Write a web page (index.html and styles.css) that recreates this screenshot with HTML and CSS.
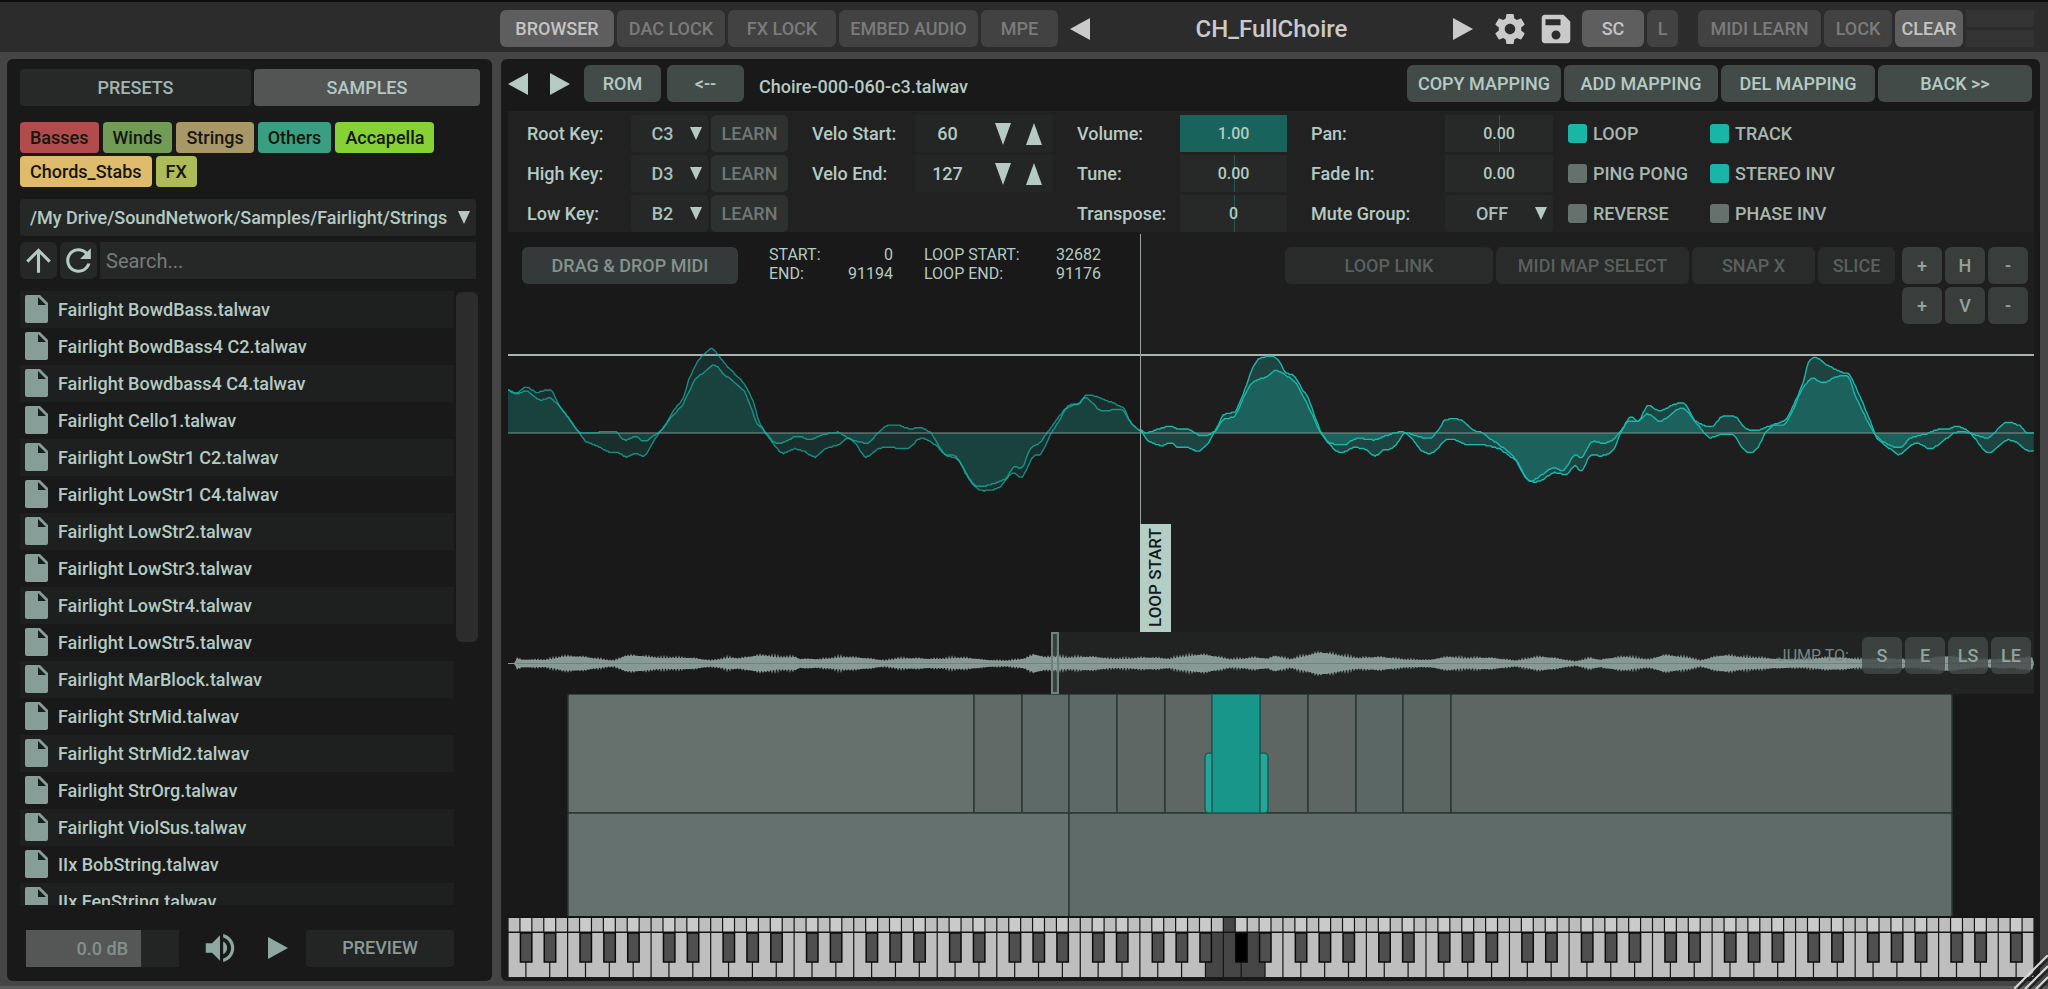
FILE: index.html
```html
<!DOCTYPE html>
<html lang="en">
<head>
<meta charset="utf-8">
<title>CH_FullChoire</title>
<link rel="stylesheet" href="styles.css">
</head>
<body>
<svg class="defs" aria-hidden="true">
  <symbol id="i-left" viewBox="0 0 20 22" preserveAspectRatio="none"><path d="M20 0v22L0 11z"/></symbol>
  <symbol id="i-right" viewBox="0 0 20 22" preserveAspectRatio="none"><path d="M0 0v22l20-11z"/></symbol>
  <symbol id="i-down" viewBox="0 0 16 22" preserveAspectRatio="none"><path d="M0 0h16L8 22z"/></symbol>
  <symbol id="i-up" viewBox="0 0 16 22" preserveAspectRatio="none"><path d="M0 22h16L8 0z"/></symbol>
  <symbol id="i-file" viewBox="0 0 23 28"><path d="M2 0h13l8 8v18a2 2 0 0 1-2 2H2a2 2 0 0 1-2-2V2a2 2 0 0 1 2-2z"/><path class="fold" d="M13 2v8h8z"/></symbol>
</svg>

<header class="topbar">
  <nav class="modes">
    <button class="tb on w-browser">BROWSER</button>
    <button class="tb w-dac">DAC LOCK</button>
    <button class="tb w-dac">FX LOCK</button>
    <button class="tb w-embed">EMBED AUDIO</button>
    <button class="tb w-mpe">MPE</button>
  </nav>
  <div class="preset">
    <button class="icon-btn" aria-label="Previous preset"><svg class="tri"><use href="#i-left"/></svg></button>
    <button class="preset-name">CH_FullChoire</button>
    <button class="icon-btn" aria-label="Next preset"><svg class="tri"><use href="#i-right"/></svg></button>
  </div>
  <div class="tools">
    <button class="icon-btn" aria-label="Settings"><svg class="big-icon" viewBox="0 0 24 24"><path d="M19.43 12.98c.04-.32.07-.64.07-.98s-.03-.66-.07-.98l2.11-1.65c.19-.15.24-.42.12-.64l-2-3.46c-.12-.22-.39-.3-.61-.22l-2.49 1c-.52-.4-1.08-.73-1.69-.98l-.38-2.65C14.46 2.18 14.25 2 14 2h-4c-.25 0-.46.18-.49.42l-.38 2.65c-.61.25-1.17.59-1.69.98l-2.49-1c-.23-.09-.49 0-.61.22l-2 3.46c-.13.22-.07.49.12.64l2.11 1.65c-.04.32-.07.65-.07.98s.03.66.07.98l-2.11 1.65c-.19.15-.24.42-.12.64l2 3.46c.12.22.39.3.61.22l2.49-1c.52.4 1.08.73 1.69.98l.38 2.65c.03.24.24.42.49.42h4c.25 0 .46-.18.49-.42l.38-2.65c.61-.25 1.17-.59 1.69-.98l2.49 1c.23.09.49 0 .61-.22l2-3.46c.12-.22.07-.49-.12-.64l-2.11-1.65zM12 15.5c-1.93 0-3.5-1.57-3.5-3.5s1.57-3.5 3.5-3.5 3.5 1.57 3.5 3.5-1.57 3.5-3.5 3.5z"/></svg></button>
    <button class="icon-btn" aria-label="Save"><svg class="big-icon" viewBox="2 2 20 20"><path d="M17 2.500H4.500c-1.100 0-2 .9-2 2v15c0 1.100.9 2 2 2h15c1.100 0 2-.9 2-2V7l-4.500-4.500zM12 19a3 3 0 1 1 0-6 3 3 0 0 1 0 6zm3-9.500H5v-4h10v4z"/></svg></button>
  </div>
  <div class="midi">
    <button class="tb on w-sc">SC</button>
    <button class="tb w-l">L</button>
    <button class="tb w-learn">MIDI LEARN</button>
    <button class="tb w-lock">LOCK</button>
    <button class="tb on w-lock">CLEAR</button>
    <div class="meters"><span></span><span></span></div>
  </div>
</header>

<main class="main">
  <aside class="panel sidebar">
    <div class="tabs">
      <button class="tab">PRESETS</button>
      <button class="tab active">SAMPLES</button>
    </div>
    <div class="tags">
      <button class="tag red">Basses</button>
      <button class="tag green">Winds</button>
      <button class="tag tan">Strings</button>
      <button class="tag teal">Others</button>
      <button class="tag lime">Accapella</button>
      <button class="tag sand">Chords_Stabs</button>
      <button class="tag olive">FX</button>
    </div>
    <div class="pick path">
      <select aria-label="Folder"><option>/My Drive/SoundNetwork/Samples/Fairlight/Strings</option></select>
      <svg class="caret"><use href="#i-down"/></svg>
    </div>
    <div class="search-row">
      <button class="sq" aria-label="Parent folder"><svg viewBox="0 0 24 24"><path d="M4 12l1.410 1.410L11 7.830V20h2V7.830l5.580 5.590L20 12l-8-8-8 8z"/></svg></button>
      <button class="sq" aria-label="Refresh"><svg viewBox="0 0 24 24"><path d="M17.650 6.350C16.200 4.900 14.210 4 12 4c-4.420 0-7.990 3.580-7.990 8s3.570 8 7.990 8c3.730 0 6.840-2.550 7.730-6h-2.080c-.82 2.330-3.040 4-5.650 4-3.310 0-6-2.690-6-6s2.690-6 6-6c1.660 0 3.140.69 4.220 1.780L13 11h7V4l-2.350 2.350z"/></svg></button>
      <input class="search" type="search" placeholder="Search..." aria-label="Search">
    </div>
    <div class="files">
      <ul class="file-list">
        <li><svg><use href="#i-file"/></svg>Fairlight BowdBass.talwav</li>
        <li><svg><use href="#i-file"/></svg>Fairlight BowdBass4 C2.talwav</li>
        <li><svg><use href="#i-file"/></svg>Fairlight Bowdbass4 C4.talwav</li>
        <li><svg><use href="#i-file"/></svg>Fairlight Cello1.talwav</li>
        <li><svg><use href="#i-file"/></svg>Fairlight LowStr1 C2.talwav</li>
        <li><svg><use href="#i-file"/></svg>Fairlight LowStr1 C4.talwav</li>
        <li><svg><use href="#i-file"/></svg>Fairlight LowStr2.talwav</li>
        <li><svg><use href="#i-file"/></svg>Fairlight LowStr3.talwav</li>
        <li><svg><use href="#i-file"/></svg>Fairlight LowStr4.talwav</li>
        <li><svg><use href="#i-file"/></svg>Fairlight LowStr5.talwav</li>
        <li><svg><use href="#i-file"/></svg>Fairlight MarBlock.talwav</li>
        <li><svg><use href="#i-file"/></svg>Fairlight StrMid.talwav</li>
        <li><svg><use href="#i-file"/></svg>Fairlight StrMid2.talwav</li>
        <li><svg><use href="#i-file"/></svg>Fairlight StrOrg.talwav</li>
        <li><svg><use href="#i-file"/></svg>Fairlight ViolSus.talwav</li>
        <li><svg><use href="#i-file"/></svg>IIx BobString.talwav</li>
        <li><svg><use href="#i-file"/></svg>IIx FenString.talwav</li>
      </ul>
      <div class="scroll"></div>
    </div>
    <div class="player">
      <input class="gain" type="text" value="0.0 dB" aria-label="Preview volume">
      <svg class="speaker" viewBox="0 0 24 24" role="img" aria-label="Volume"><path d="M3 9v6h4l5 5V4L7 9H3zm13.500 3c0-1.770-1.020-3.290-2.500-4.030v8.050c1.480-.73 2.500-2.250 2.500-4.020zM14 3.230v2.060c2.890.86 5 3.540 5 6.710s-2.110 5.850-5 6.710v2.060c4.010-.91 7-4.490 7-8.770s-2.990-7.860-7-8.770z"/></svg>
      <button class="icon-btn" aria-label="Play"><svg class="tri"><use href="#i-right"/></svg></button>
      <button class="preview">PREVIEW</button>
    </div>
  </aside>

  <section class="panel editor">
    <div class="head">
      <button class="icon-btn" aria-label="Previous sample"><svg class="tri"><use href="#i-left"/></svg></button>
      <button class="icon-btn" aria-label="Next sample"><svg class="tri"><use href="#i-right"/></svg></button>
      <button class="hb narrow">ROM</button>
      <button class="hb narrow">&lt;--</button>
      <span class="filename">Choire-000-060-c3.talwav</span>
      <div class="mapping">
        <button class="hb">COPY MAPPING</button>
        <button class="hb">ADD MAPPING</button>
        <button class="hb">DEL MAPPING</button>
        <button class="hb">BACK &gt;&gt;</button>
      </div>
    </div>

    <div class="params">
      <div class="group keys">
        <label for="root">Root Key:</label>
        <div class="pick"><select id="root"><option>C3</option></select><svg class="caret"><use href="#i-down"/></svg></div>
        <button class="learn">LEARN</button>
        <label for="high">High Key:</label>
        <div class="pick"><select id="high"><option>D3</option></select><svg class="caret"><use href="#i-down"/></svg></div>
        <button class="learn">LEARN</button>
        <label for="low">Low Key:</label>
        <div class="pick"><select id="low"><option>B2</option></select><svg class="caret"><use href="#i-down"/></svg></div>
        <button class="learn">LEARN</button>
      </div>
      <div class="group velo">
        <label for="vs">Velo Start:</label>
        <div class="stepper"><input id="vs" type="text" value="60"><button aria-label="Velo start down"><svg><use href="#i-down"/></svg></button><button aria-label="Velo start up"><svg><use href="#i-up"/></svg></button></div>
        <label for="ve">Velo End:</label>
        <div class="stepper"><input id="ve" type="text" value="127"><button aria-label="Velo end down"><svg><use href="#i-down"/></svg></button><button aria-label="Velo end up"><svg><use href="#i-up"/></svg></button></div>
      </div>
      <div class="group tune">
        <label for="vol">Volume:</label><input id="vol" class="num full" type="text" value="1.00">
        <label for="tun">Tune:</label><input id="tun" class="num mid" type="text" value="0.00">
        <label for="tra">Transpose:</label><input id="tra" class="num mid" type="text" value="0">
      </div>
      <div class="group pan">
        <label for="pan">Pan:</label><input id="pan" class="num mid" type="text" value="0.00">
        <label for="fad">Fade In:</label><input id="fad" class="num" type="text" value="0.00">
        <label for="mut">Mute Group:</label>
        <div class="pick mute"><select id="mut"><option>OFF</option></select><svg class="caret"><use href="#i-down"/></svg></div>
      </div>
      <div class="checks">
        <label><input type="checkbox" checked>LOOP</label>
        <label><input type="checkbox" checked>TRACK</label>
        <label><input type="checkbox">PING PONG</label>
        <label><input type="checkbox" checked>STEREO INV</label>
        <label><input type="checkbox">REVERSE</label>
        <label><input type="checkbox">PHASE INV</label>
      </div>
    </div>

    <div class="wave">
      <svg class="layer" id="wave" viewBox="508 232 1526 400" preserveAspectRatio="none" aria-hidden="true"></svg>
      <div class="marker">LOOP START</div>
      <div class="wave-tools">
        <button class="drag">DRAG &amp; DROP MIDI</button>
        <dl class="pos first"><dt>START:</dt><dd>0</dd><dt>END:</dt><dd>91194</dd></dl>
        <dl class="pos"><dt>LOOP START:</dt><dd>32682</dd><dt>LOOP END:</dt><dd>91176</dd></dl>
        <div class="snap">
          <button class="dim w-link">LOOP LINK</button>
          <button class="dim w-select">MIDI MAP SELECT</button>
          <button class="dim w-snap">SNAP X</button>
          <button class="dim w-slice">SLICE</button>
        </div>
        <div class="zoom">
          <button class="sm">+</button><button class="sm">H</button><button class="sm">-</button>
          <button class="sm">+</button><button class="sm">V</button><button class="sm">-</button>
        </div>
      </div>
    </div>

    <div class="overview">
      <svg class="layer" id="overview" viewBox="508 632 1526 62" preserveAspectRatio="none" aria-hidden="true"></svg>
      <div class="jump">
        <span>JUMP TO:</span>
        <button class="sm">S</button><button class="sm">E</button><button class="sm">LS</button><button class="sm">LE</button>
      </div>
    </div>

    <svg class="zones" viewBox="508 694 1526 222" preserveAspectRatio="none" role="img" aria-label="Key zones">
      <g stroke="#2d3936" stroke-width="1.5">
        <rect x="568" y="694" width="406" height="119" rx="2" fill="#66706d"/>
        <rect x="974" y="694" width="48" height="119" fill="#626a67"/>
        <rect x="1022" y="694" width="47" height="119" fill="#5e6a67"/>
        <rect x="1069" y="694" width="48" height="119" fill="#5d6966"/>
        <rect x="1117" y="694" width="48" height="119" fill="#5f6764"/>
        <rect x="1165" y="694" width="47" height="119" fill="#5f6764"/>
        <rect x="1260" y="694" width="48" height="119" fill="#5e6663"/>
        <rect x="1308" y="694" width="48" height="119" fill="#5d6663"/>
        <rect x="1356" y="694" width="47" height="119" fill="#5b6764"/>
        <rect x="1403" y="694" width="48" height="119" fill="#5b6663"/>
        <rect x="1451" y="694" width="501" height="119" rx="2" fill="#5d6662"/>
        <rect x="568" y="813" width="501" height="105" rx="2" fill="#65716e"/>
        <rect x="1069" y="813" width="883" height="105" rx="2" fill="#5f6b68"/>
        <rect x="1205" y="753" width="63" height="60" rx="4" fill="#26a599" stroke="#1d5a54"/>
        <rect x="1212" y="694" width="48" height="119" fill="#18968a" stroke="#1d5a54"/>
      </g>
    </svg>
    <svg class="keyboard" id="keyboard" viewBox="0 0 1526 61" preserveAspectRatio="none" role="img" aria-label="Keyboard"></svg>
  </section>
</main>
<svg class="grip" viewBox="0 0 34 34" aria-hidden="true"><path d="M0 34L34 0M11 34L34 11M22 34L34 22" stroke="#d8d8d8" stroke-width="2"/><path d="M4 34L34 4M15 34L34 15M26 34L34 26" stroke="#222" stroke-width="2"/></svg>
<script src="app.js"></script>
</body>
</html>
```

FILE: styles.css
```css
* { box-sizing: border-box; }
body {
  margin: 0;
  height: 100vh;
  display: flex;
  flex-direction: column;
  overflow: hidden;
  background: #454545;
  border-bottom: 3px solid #5c5c5c;
  font: 500 18px/20px Roboto, "Liberation Sans", sans-serif;
  color: #b4cac3;
}
button, input, select {
  font: inherit;
  color: inherit;
  border: 0;
  padding: 0;
  margin: 0;
  background: none;
  border-radius: 0;
  outline: 0;
}
svg { display: block; fill: currentColor; }
.defs { position: absolute; width: 0; height: 0; }
.tri { width: 20px; height: 22px; }
.fold { fill: #15201e; }

/* top bar */
.topbar {
  flex: none;
  height: 52px;
  padding: 8px 14px 0 500px;
  border-top: 2px solid #0c0c0c;
  background: #2c2c2c;
  display: flex;
  justify-content: space-between;
  color: #cacaca;
}
.modes, .midi { display: flex; gap: 3px; height: 37px; }
.tb {
  height: 37px;
  border-radius: 6px;
  background: #424242;
  color: #7b7b7b;
}
.tb.on { background: #5e5e5e; color: #c4c4c4; }
.w-browser { width: 114px; }
.w-dac { width: 108px; }
.w-embed { width: 139px; }
.w-mpe { width: 77px; }
.w-sc { width: 62px; }
.w-l { width: 31px; margin-right: 17px; }
.w-learn { width: 123px; }
.w-lock { width: 68px; }
.preset {
  flex: 1;
  display: flex;
  align-items: center;
  height: 37px;
  padding: 0 22px 0 12px;
}
.preset-name { flex: 1; font-size: 24px; }
.tools { display: flex; align-items: center; gap: 16px; height: 37px; margin-right: 11px; }
.big-icon { width: 30px; height: 30px; }
.tools .icon-btn:first-child svg { width: 36px; height: 36px; margin: 0 -3px; }
.meters { width: 68px; display: flex; flex-direction: column; gap: 3px; }
.meters span { flex: 1; background: #333; }

/* panels */
.main {
  flex: 1;
  min-height: 0;
  display: flex;
  gap: 9px;
  padding: 7px 8px 5px 7px;
}
.panel { background: #191919; border-radius: 6px; }

/* sidebar */
.sidebar {
  flex: 0 0 485px;
  display: flex;
  flex-direction: column;
  padding: 10px 12px 14px 13px;
}
.tabs { display: flex; gap: 3px; }
.tab { flex: 231; height: 37px; border-radius: 4px; background: #272929; color: #a4b5b0; }
.tab.active { flex: 226; background: #535454; color: #b4c8c2; }
.tags { display: flex; flex-wrap: wrap; gap: 3px 4px; margin-top: 16px; }
.tag { height: 31px; padding: 0 10px; border-radius: 4px; color: #16160f; }
.red { background: #b14b4c; }
.green { background: #729b56; }
.tan { background: #a89868; }
.teal { background: #3a9f82; }
.lime { background: #85d136; }
.sand { background: #dfbc6c; }
.olive { background: #adbb58; }
.pick { position: relative; background: #262828; border-radius: 4px; }
.pick select {
  appearance: none;
  width: 100%;
  height: 37px;
  padding-right: 14px;
  text-align-last: center;
  color: #a9bfb8;
}
.pick .caret { position: absolute; right: 6px; top: 12px; width: 12px; height: 13px; pointer-events: none; }
.path { margin: 12px 4px 0 0; }
.path select { padding: 0 24px 0 10px; text-align-last: left; color: inherit; }
.search-row { display: flex; gap: 3px; margin: 6px 4px 0 0; }
.sq { width: 37px; height: 37px; border-radius: 6px; background: #262828; display: grid; place-items: center; }
.sq svg { width: 37px; height: 37px; }
.search { flex: 1; height: 37px; padding-left: 6px; background: #262828; font-size: 20px; font-weight: 400; }
.search::placeholder { color: #767c7a; opacity: 1; }
.files { flex: 1; min-height: 0; overflow: hidden; display: flex; gap: 2px; margin-top: 12px; }
.file-list { flex: 1; margin: 0; padding: 0; list-style: none; }
.file-list li { height: 37px; display: flex; align-items: center; gap: 10px; padding-left: 5px; }
.file-list li:nth-child(odd) { background: #1e1f1f; }
.file-list svg { width: 23px; height: 28px; margin-bottom: 2px; color: #879d97; }
.scroll { width: 22px; height: 57%; margin: 1px 2px 0 0; border-radius: 6px; background: #2c2c2c; }
.player { display: flex; align-items: center; margin: 24px 26px 0 6px; color: #8ea8a1; }
.gain {
  width: 153px;
  height: 37px;
  padding-right: 51px;
  text-align: right;
  color: #83908c;
  background: linear-gradient(90deg, #555656 75%, #232525 75%);
}
.speaker { width: 38px; height: 38px; margin: 0 29px 0 22px; }
.preview { flex: 1; height: 37px; margin-left: 18px; border-radius: 3px; background: #232525; color: #8b9a96; }

/* editor */
.editor {
  flex: 1;
  min-width: 0;
  display: flex;
  flex-direction: column;
  padding: 6px 6px 4px 7px;
}
.head { display: flex; align-items: center; gap: 6px; margin-bottom: 9px; }
.head .icon-btn + .icon-btn { margin: 0 8px 0 16px; }
.hb { height: 37px; width: 154px; border-radius: 6px; background: #434b49; }
.hb.narrow { width: 77px; }
.filename { margin-left: 9px; padding-top: 6px; }
.mapping { display: flex; gap: 3px; margin: 0 2px 0 auto; }

.params { display: flex; gap: 15px; padding: 4px 0 0 19px; background: #212121; }
.group { display: grid; gap: 3px; grid-auto-rows: 37px; align-items: center; }
.group + .group { padding-left: 9px; }
.keys { grid-template-columns: 101px 77px 77px; }
.velo { grid-template-columns: 100px 138px; }
.tune { grid-template-columns: 100px 107px; }
.pan { grid-template-columns: 131px 108px; }
.learn { height: 37px; border-radius: 5px; background: #2d3130; color: #707876; }
.stepper { display: flex; align-items: center; gap: 15px; height: 37px; padding-right: 11px; background: #242525; }
.stepper input { flex: 1; min-width: 0; text-align: center; }
.stepper svg { width: 16px; height: 22px; }
.num { width: 100%; height: 37px; background: #272828; text-align: center; font-size: 16px; }
.num.full { background: #18645c; }
.num.mid { background: linear-gradient(90deg, transparent 50%, #225550 50%, #225550 51%, transparent 51%) #272828; }
.checks { display: grid; grid-template: repeat(3, 37px) / 142px 1fr; row-gap: 3px; color: #a5b7b1; }
.checks label { display: flex; align-items: center; gap: 6px; }
.checks input { appearance: none; width: 19px; height: 19px; border-radius: 3px; background: #66716e; }
.checks input:checked { background: #19b5a8; }

.wave { position: relative; flex: 400; }
.layer { position: absolute; left: 0; top: 0; width: 100%; height: 100%; }
.wave-tools { position: relative; display: flex; align-items: flex-start; padding: 15px 6px 0 14px; }
.drag { width: 216px; height: 37px; border-radius: 6px; background: #343a39; color: #84928e; }
.pos {
  display: grid;
  grid-template-columns: 1fr auto;
  margin: -2px 0 0 31px;
  width: 177px;
  font-size: 16px;
  line-height: 19px;
  font-weight: 400;
}
.pos.first { width: 124px; }
.pos dd { margin: 0; text-align: right; }
.snap { display: flex; gap: 3px; margin-left: auto; }
.dim { height: 37px; border-radius: 6px; background: #292a2a; color: #5a605e; }
.w-link { width: 208px; }
.w-select { width: 193px; }
.w-snap { width: 123px; }
.w-slice { width: 77px; }
.zoom { display: grid; grid-template-columns: repeat(3, 40px); gap: 3px; margin-left: 7px; }
.sm { width: 40px; height: 37px; border-radius: 6px; background: #393e3d; color: #93a39e; }
.marker {
  position: absolute;
  left: 41%;
  bottom: 0;
  margin-left: 6px;
  width: 31px;
  height: 108px;
  background: #b4cec6;
  color: #151a19;
  writing-mode: vertical-rl;
  transform: rotate(180deg);
  text-align: center;
  font-size: 17px;
  line-height: 31px;
}
.overview { position: relative; flex: 62; }
.jump { position: relative; display: flex; gap: 3px; justify-content: flex-end; padding: 5px 3px 0 0; }
.jump span { align-self: center; margin-right: 10px; font-size: 16px; font-weight: 400; color: #7d8683; }
.jump .sm { background: #434a48cc; }
.zones { flex: 222; min-height: 0; width: 100%; }
.keyboard { flex: 61; min-height: 0; width: 100%; }
.grip { position: absolute; right: 0; bottom: 0; width: 34px; height: 34px; }
```

FILE: app.js
```js
const NS = "http://www.w3.org/2000/svg";
function add(parent, tag, attrs) {
  const el = document.createElementNS(NS, tag);
  for (const k in attrs) el.setAttribute(k, attrs[k]);
  parent.appendChild(el);
  return el;
}

// Sample peaks: [x, y] pairs, split where the loop begins.
function points(text, x0, sx) {
  return text.split(" ").map(p => {
    const [x, y] = p.split(",").map(Number);
    return [x0 + x / sx, 330 + y / 3];
  });
}
const preLoop = [
  "18,180 40,190 62,172 90,187 122,180 145,230 165,262 190,306 280,306 300,330 328,320 348,334 370,318 392,298 412,262 440,225 460,175 470,150 490,128 512,107 522,108 540,133 565,155 590,185 605,230 620,280 638,303 660,335 680,338 715,320 750,328 775,315 818,307 838,325 888,338 912,308 932,288 965,287 990,297 1015,292 1040,310 1055,340 1072,372 1100,380 1125,430 1145,465 1160,482 1205,472 1235,430 1260,440 1285,382 1305,370 1330,310 1350,270 1370,228 1395,222 1415,195 1460,210 1505,235 1520,275 1545,302",
  "18,180 45,190 60,182 75,192 98,210 122,205 150,240 190,305 208,335 235,348 260,365 285,368 305,381 325,370 350,375 375,325 395,290 420,240 442,205 455,150 475,100 490,75 512,56 525,75 548,110 585,155 610,210 625,275 645,318 680,368 710,357 735,365 760,381 785,357 815,345 840,325 860,345 882,381 912,357 940,352 985,355 1015,325 1050,345 1075,375 1105,390 1125,435 1145,468 1180,465 1220,445 1240,412 1260,412 1280,355 1300,340 1325,300 1345,265 1365,235 1400,218 1412,202 1450,242 1500,238 1520,275 1545,302"
].map(t => points(t, 500, 2.412));
const loopA = [
  "60,298 80,308 120,296 150,288 175,297 205,298 245,317 285,304 310,268 345,258 370,205 395,160 440,140 468,122 525,155 550,200 575,250 600,305 630,345 662,368 700,353 740,360 765,377 790,360 820,353 855,310 890,318 930,325 955,300 975,270 1025,270 1060,300 1085,308 1115,330 1145,350 1185,385 1215,440 1240,455 1270,448 1300,428 1340,432 1365,408 1385,423",
  "60,298 80,330 125,347 150,338 175,352 205,353 235,363 265,338 290,295 310,255 345,245 360,215 380,165 395,120 415,88 455,78 475,90 495,125 525,140 545,175 565,205 585,260 605,310 630,338 670,345 710,325 765,330 800,316 845,306 870,320 905,362 940,367 975,332 1005,330 1035,343 1085,344 1135,355 1165,375 1195,400 1215,438 1235,452 1265,435 1300,413 1330,420 1365,376 1385,382"
].map(t => points(t, 1120, 3));
const loopB = [
  "90,378 125,377 160,360 180,312 210,262 235,273 262,228 300,242 345,223 375,222 405,272 455,290 485,260 525,260 555,293 590,302 630,288 675,282 700,240 720,190 735,165 755,145 790,158 825,142 865,140 885,195 905,240 940,305 965,333 1020,353 1050,325 1100,311 1140,298 1165,298 1190,288 1230,310 1285,368 1335,333 1365,335 1405,363 1421,362",
  "95,336 130,340 160,328 180,305 205,275 235,272 262,252 300,273 355,238 375,238 405,275 445,320 470,318 480,312 522,316 545,352 570,368 595,350 615,310 640,285 680,265 715,195 730,155 745,98 765,82 800,105 850,128 868,135 905,210 930,270 950,325 1000,362 1020,373 1060,343 1085,344 1110,357 1150,333 1185,308 1225,308 1265,320 1290,320 1335,278 1380,287 1400,307 1421,308"
].map(t => points(t, 1560, 3));

// Catmull-Rom resampling, quantised vertically like a peak display.
function resample(pts) {
  const out = [];
  for (let i = 0; i < pts.length - 1; i++) {
    const p0 = pts[i - 1] || pts[i], p1 = pts[i], p2 = pts[i + 1], p3 = pts[i + 2] || p2;
    const n = Math.max(1, Math.round((p2[0] - p1[0]) / 1.5));
    for (let k = 0; k < n; k++) {
      const t = k / n;
      const s = 0.5 * (2 * p1[1] + (p2[1] - p0[1]) * t + (2 * p0[1] - 5 * p1[1] + 4 * p2[1] - p3[1]) * t * t + (3 * p1[1] - p0[1] - 3 * p2[1] + p3[1]) * t * t * t);
      out.push([p1[0] + (p2[0] - p1[0]) * t, Math.round(s / 1.3) * 1.3]);
    }
  }
  out.push(pts[pts.length - 1]);
  return out;
}

const wave = document.getElementById("wave");
const MID = 433;
function trace(raw, fillAlpha, lineAlpha) {
  const pts = resample(raw);
  const d = pts.map(p => p[0].toFixed(1) + " " + p[1].toFixed(1)).join("L");
  add(wave, "path", { d: `M${pts[0][0]} ${MID}L${d}L${pts[pts.length - 1][0]} ${MID}z`, fill: "#1ab8ab", "fill-opacity": fillAlpha });
  return () => add(wave, "path", { d: "M" + d, fill: "none", stroke: "#1ab8ab", "stroke-opacity": lineAlpha, "stroke-width": 1.4, "stroke-linejoin": "round" });
}
add(wave, "rect", { x: 1140, y: 232, width: 894, height: 400, fill: "#1e1e1e" });
add(wave, "rect", { x: 508, y: 354, width: 1526, height: 2, fill: "#a9b2b0" });
const lines = [
  ...preLoop.map(p => trace(p, 0.14, 0.7)),
  ...loopA.map((p, i) => trace(p.concat(loopB[i]), 0.25, 1))
];
add(wave, "rect", { x: 508, y: 432, width: 1526, height: 2, fill: "#7b9690", "fill-opacity": 0.5 });
lines.forEach(draw => draw());
add(wave, "rect", { x: 1140, y: 234, width: 1, height: 292, fill: "#98a29f" });

// Whole-sample overview: envelope half-heights over x.
const over = document.getElementById("overview");
const env = [[508,0],[514,0],[517,6],[522,4],[545,5],[562,9],[573,8],[600,6],[614,4],[625,9],[650,8],[672,8],[700,5],[711,4],[728,8],[740,6],[765,10],[795,8],[800,5],[820,5],[840,9],[862,6],[885,4],[897,7],[930,5],[955,8],[985,4],[1005,4],[1025,6],[1034,10],[1045,7],[1054,9],[1080,8],[1110,6],[1120,7],[1170,6],[1180,10],[1200,10],[1230,6],[1255,7],[1268,5],[1275,9],[1290,6],[1300,9],[1320,12],[1345,10],[1360,7],[1380,7],[1400,6],[1430,4],[1450,8],[1480,7],[1515,4],[1535,8],[1555,6],[1575,3],[1590,7],[1600,4],[1628,9],[1650,5],[1663,9],[1690,8],[1700,4],[1712,7],[1725,9],[1755,8],[1775,5],[1793,5],[1817,7],[1860,6],[1905,5],[1945,8],[1990,5],[2015,5],[2030,9],[2033,5],[2034,0]];
function ampAt(x) {
  let i = 1;
  while (env[i][0] < x) i++;
  const [x0, a0] = env[i - 1], [x1, a1] = env[i];
  return a0 + (a1 - a0) * (x - x0) / (x1 - x0);
}
add(over, "rect", { x: 1056, y: 632, width: 978, height: 62, fill: "#212322" });
const upper = [], lower = [];
for (let i = 0; 508 + i <= 2034; i++) {
  const x = 508 + i;
  const spike = i % 3 === 0 ? 1.02 + 0.12 * Math.sin(i * 1.7) : 0.78 + 0.12 * Math.sin(i * 0.11);
  const a = Math.max(ampAt(x) * spike, 0.5);
  upper.push(x + " " + (663.5 - a).toFixed(1));
  lower.unshift(x + " " + (663.5 + a).toFixed(1));
}
add(over, "path", { d: "M" + upper.concat(lower).join("L") + "z", fill: "#879a95" });
add(over, "rect", { x: 516, y: 663, width: 1518, height: 1, fill: "#6f827d" });
add(over, "rect", { x: 1052, y: 633, width: 6, height: 60, fill: "#8fb0a8", "fill-opacity": 0.25, stroke: "#73817d", "stroke-width": 2 });

// 128 MIDI notes: a trigger strip above, the keys below.
const kb = document.getElementById("keyboard");
const W = 1526 / 128, BLACK = [1, 3, 6, 8, 10];
const isBlack = n => BLACK.includes(((n % 12) + 12) % 12);
add(kb, "rect", { x: 0, y: 0, width: 1526, height: 61, fill: "#121514" });
for (let n = 0; n < 128; n++) {
  add(kb, "rect", { x: n * W + 0.6, y: 2, width: W - 1.2, height: 13.5, fill: n === 60 ? "#454545" : isBlack(n) ? "#cacaca" : "#bebebe" });
  if (isBlack(n)) continue;
  const x0 = (isBlack(n - 1) && n > 0 ? (n - 0.5) * W : n * W) + 0.6;
  const x1 = (isBlack(n + 1) && n < 127 ? (n + 1.5) * W : (n + 1) * W) - 0.6;
  add(kb, "rect", { x: x0, y: 17, width: x1 - x0, height: 44, fill: [59, 60, 62].includes(n) ? "#454545" : "#bebebe" });
}
for (let n = 0; n < 128; n++) {
  if (isBlack(n)) add(kb, "rect", { x: n * W + 0.5, y: 17, width: W - 0.5, height: 29, fill: n === 61 ? "#000" : "#4f4f4f", stroke: "#0b0b0b", "stroke-width": 1.5 });
}
```
